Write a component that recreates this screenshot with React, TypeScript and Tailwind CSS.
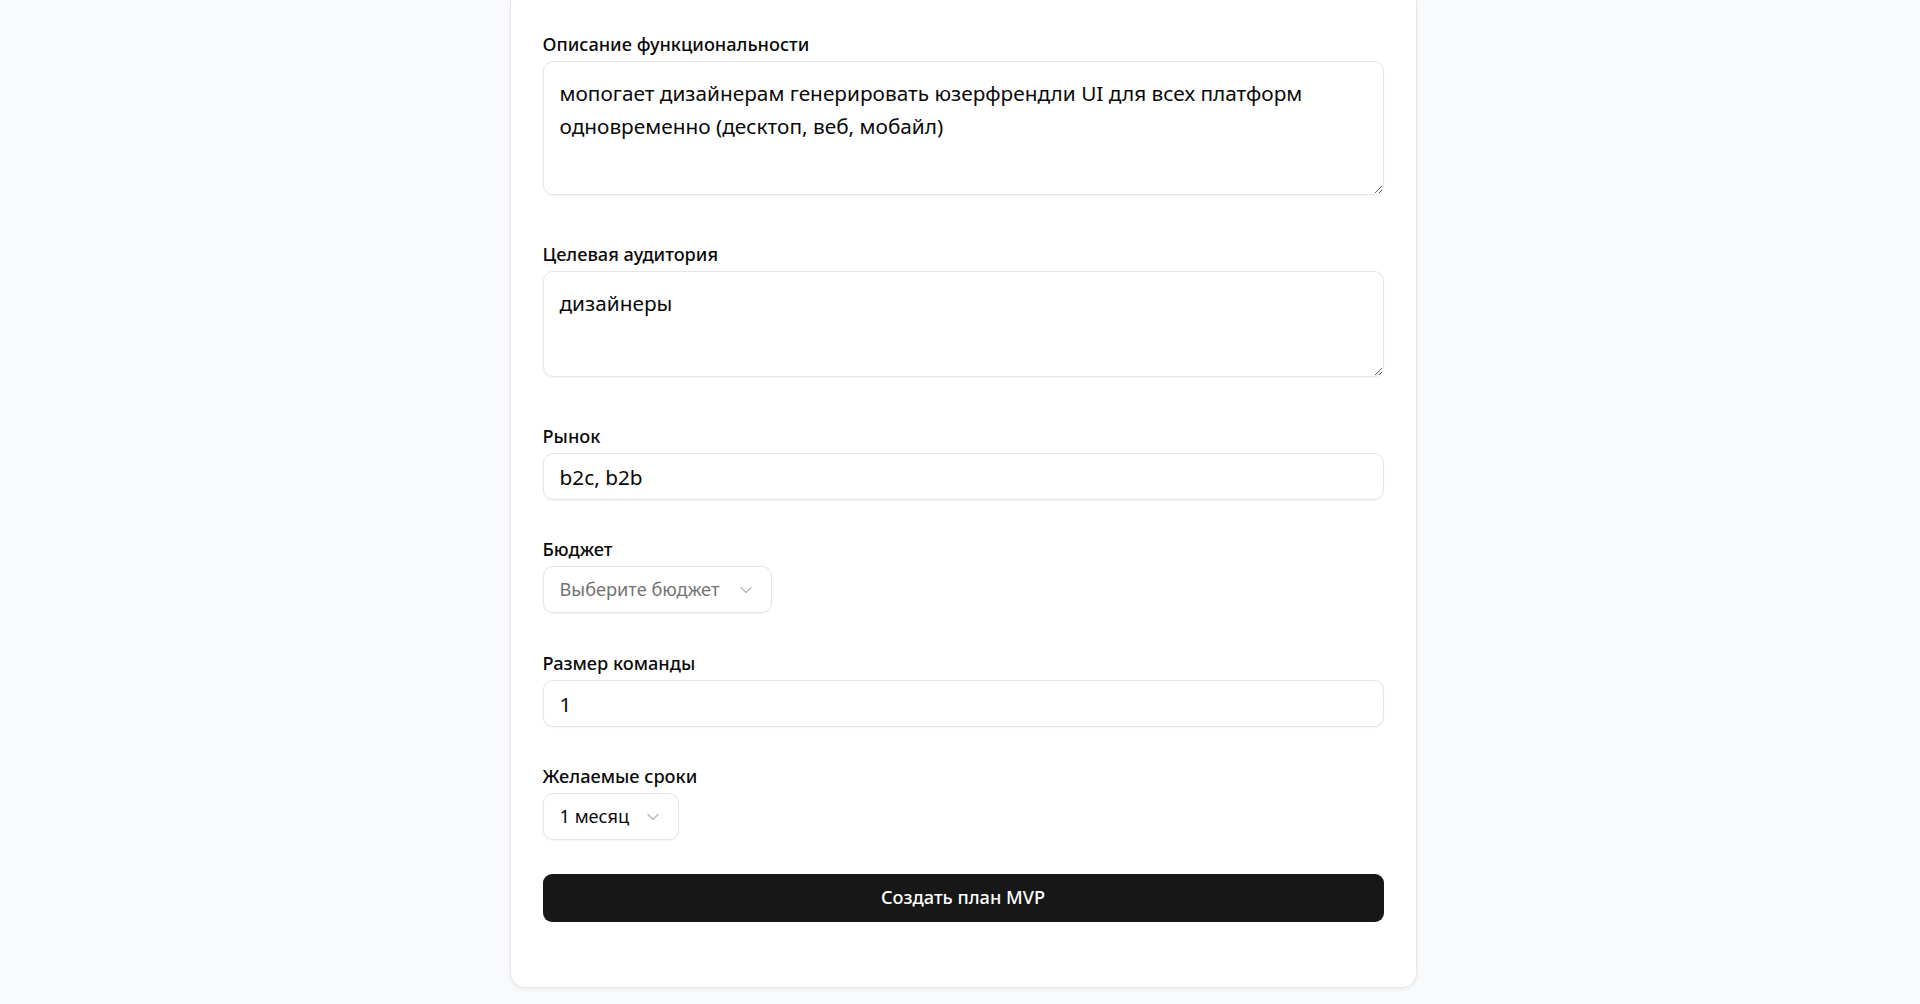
import React from "react";
import { ChevronDown } from "lucide-react";

const font = { fontFamily: '"Noto Sans", "Open Sans", sans-serif' };

function Label({ children }: { children: React.ReactNode }) {
  return (
    <div className="text-[18.2px] leading-[22px] font-medium text-[#0a0a0a]">{children}</div>
  );
}

const field =
  "mt-[6px] w-full rounded-[10px] border border-[#e5e5e5] shadow-[0_1px_2px_rgba(0,0,0,0.05)] px-[16px] text-[20.8px] text-[#0a0a0a] outline-none";

export default function App() {
  return (
    <div className="min-h-screen w-full bg-[#f9fafb] flex justify-center items-start pl-[6px]" style={font}>
      <div className="w-[907px] bg-white rounded-b-[15px] border-x border-b border-[#e5e7eb] shadow-[0_2px_4px_rgba(0,0,0,0.06)] px-8 pt-[33px] pb-[65px] flex flex-col">
        <Label>Описание функциональности</Label>
        <textarea
          className={field + " h-[134px] py-[15px] leading-[33px] resize-y"}
          defaultValue="мопогает дизайнерам генерировать юзерфрендли UI для всех платформ одновременно (десктоп, веб, мобайл)"
        />
        <div className="mt-[48px]">
          <Label>Целевая аудитория</Label>
        </div>
        <textarea
          className={field + " h-[106px] py-[15px] leading-[33px] resize-y"}
          defaultValue="дизайнеры"
        />
        <div className="mt-[48px]">
          <Label>Рынок</Label>
        </div>
        <input className={field + " h-[47px]"} defaultValue="b2c, b2b" />
        <div className="mt-[38px]">
          <Label>Бюджет</Label>
        </div>
        <div className="mt-[6px] self-start w-[229px] h-[47px] rounded-[10px] border border-[#e5e5e5] shadow-[0_1px_2px_rgba(0,0,0,0.05)] pl-[16px] pr-[15px] flex items-center justify-between gap-[10px]">
          <span className="text-[18.2px] text-[#737373] whitespace-nowrap">Выберите бюджет</span>
          <ChevronDown size={20} strokeWidth={1.6} className="text-[#737373] opacity-50 shrink-0" />
        </div>
        <div className="mt-[39px]">
          <Label>Размер команды</Label>
        </div>
        <input className={field + " h-[47px]"} defaultValue="1" />
        <div className="mt-[38px]">
          <Label>Желаемые сроки</Label>
        </div>
        <div className="mt-[6px] self-start w-[136px] h-[47px] rounded-[10px] border border-[#e5e5e5] shadow-[0_1px_2px_rgba(0,0,0,0.05)] pl-[16px] pr-[15px] flex items-center justify-between gap-[10px]">
          <span className="text-[18.2px] text-[#0a0a0a] whitespace-nowrap">1 месяц</span>
          <ChevronDown size={20} strokeWidth={1.6} className="text-[#737373] opacity-50 shrink-0" />
        </div>
        <button className="mt-[34px] w-full h-[48px] rounded-[9px] bg-[#171717] text-white text-[18.2px] font-medium">
          Создать план MVP
        </button>
      </div>
    </div>
  );
}
